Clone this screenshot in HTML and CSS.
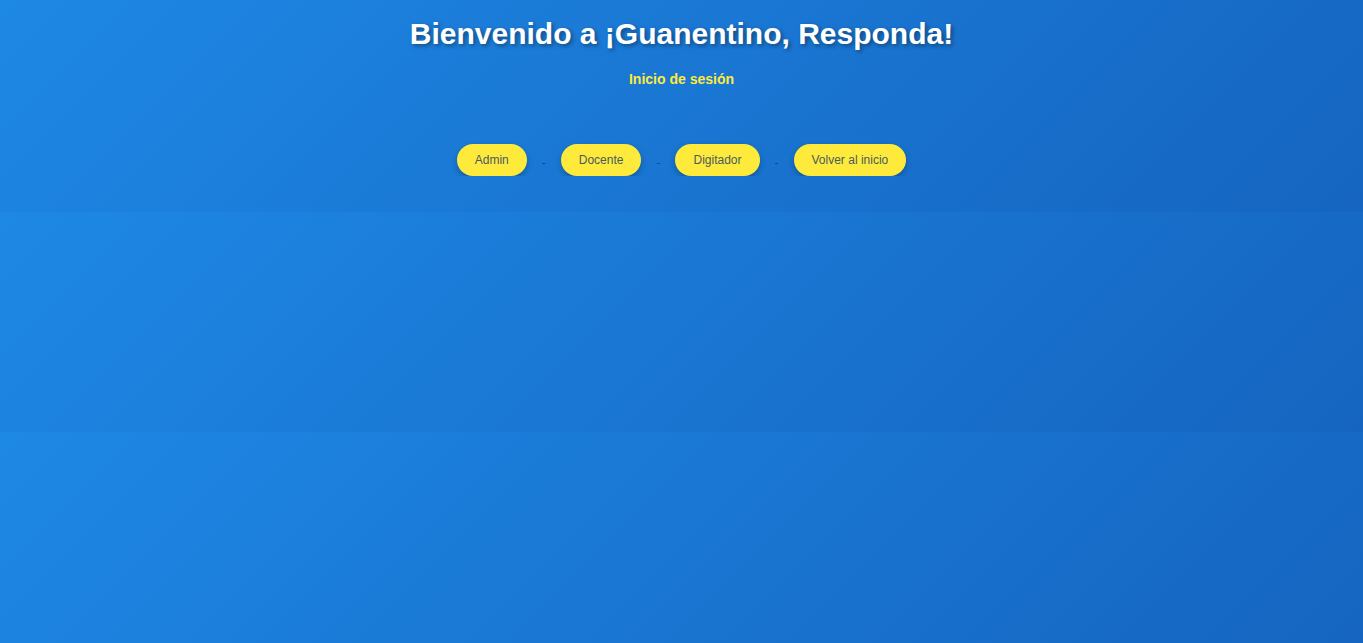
FILE: index.html
```html
<!DOCTYPE html>
<html lang="es">
<head>
<meta charset="utf-8">
<title>Guanentino, Responda</title>
<link rel="stylesheet" href="styles.css">
</head>
<body>
<header class="hero">
  <h1 class="title">Bienvenido a ¡Guanentino, Responda!</h1>
  <h4 class="subtitle">Inicio de sesión</h4>
  <nav class="roles">
    <a class="btn" href="#">Admin</a>
    <span class="sep">-</span>
    <a class="btn" href="#">Docente</a>
    <span class="sep">-</span>
    <a class="btn" href="#">Digitador</a>
    <span class="sep">-</span>
    <a class="btn" href="#">Volver al inicio</a>
  </nav>
</header>
</body>
</html>
```
FILE: styles.css
```css
html {
  min-height: 100%;
  background-color: #1976d2;
  background-image: linear-gradient(135deg, #1e88e5, #1565c0);
  background-size: 100% 220px;
  background-position: 0 -8px;
  background-repeat: repeat;
}
body {
  margin: 0;
  font-family: "Liberation Sans", Arial, sans-serif;
  color: #fff;
  text-align: center;
}
.hero {
  padding-top: 16px;
}
.title {
  margin: 0;
  font-size: 30px;
  line-height: 36px;
  font-weight: bold;
  text-shadow: 2px 2px 4px rgba(0, 0, 0, 0.4);
}
.subtitle {
  margin: 18px 0 0;
  font-size: 14px;
  line-height: 18px;
  color: #ffeb3b;
}
.roles {
  margin-top: 56px;
  display: flex;
  justify-content: center;
  align-items: center;
  gap: 15px;
}
.btn {
  display: inline-block;
  height: 32px;
  line-height: 32px;
  padding: 0 18px;
  border-radius: 16px;
  background: #fdea3b;
  color: #4a5a63;
  font-size: 12px;
  text-decoration: none;
  box-shadow: 0 3px 6px rgba(0, 0, 0, 0.25);
}
.sep {
  color: #0d47a1;
  font-size: 12px;
  padding-top: 6px;
}
```
